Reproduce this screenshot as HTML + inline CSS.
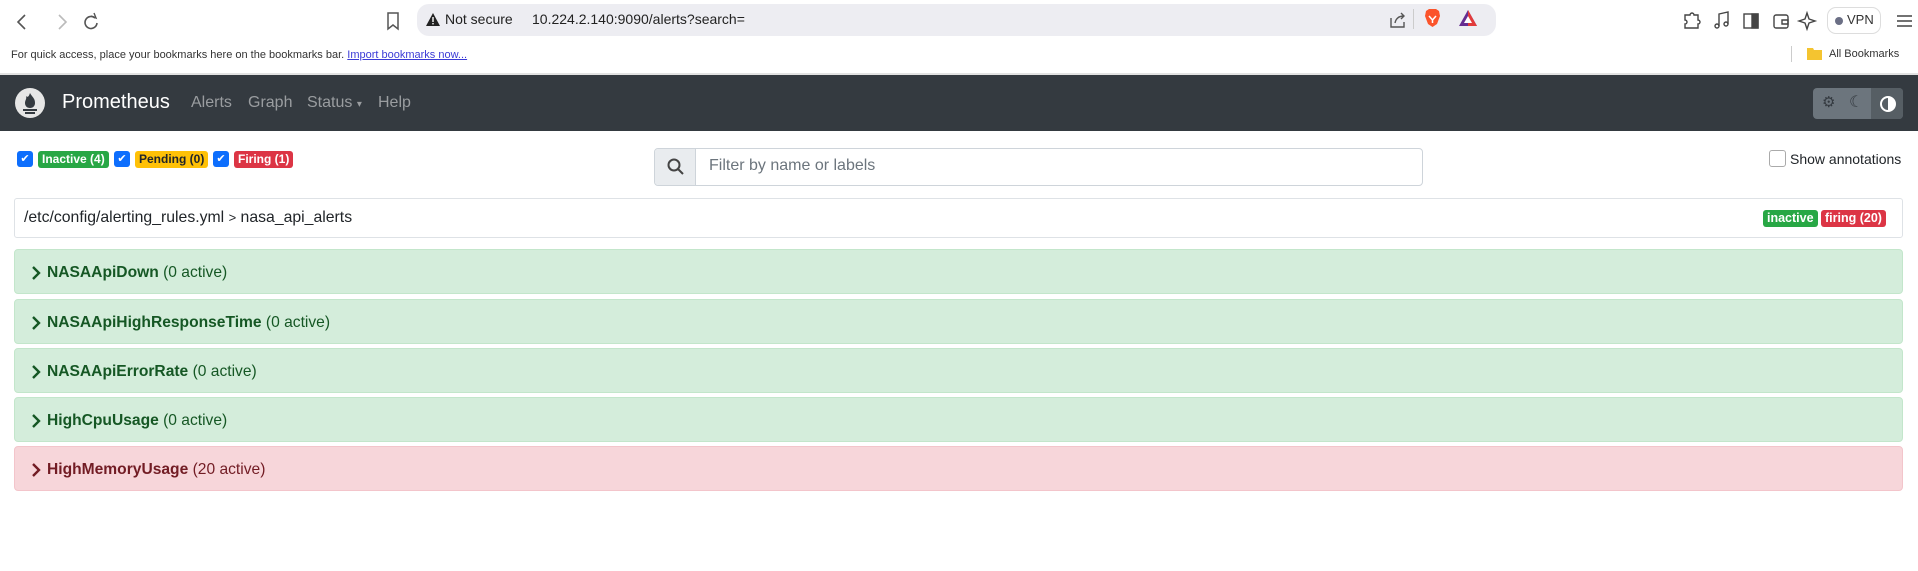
<!DOCTYPE html>
<html><head><meta charset="utf-8"><style>
*{box-sizing:border-box;margin:0;padding:0}
body{width:1918px;height:571px;overflow:hidden;background:#fff;font-family:"Liberation Sans",Arial,sans-serif;position:relative;color:#212529}
.a{position:absolute}
.url{left:417px;top:4px;width:1079px;height:32px;background:#ededf2;border-radius:12px}
.nav{left:0;top:75px;width:1918px;height:56px;background:#343a40}
.nl{color:#9a9da0;font-size:16px;top:19px}
.badge{position:absolute;top:151px;height:17px;border-radius:3px;font-size:12px;font-weight:bold;line-height:17px;padding:0 4px}
.cb{position:absolute;top:151px;width:16px;height:16px;background:#0d6efd;border-radius:3px;color:#fff;font-size:11px;text-align:center;line-height:16px}
.row{position:absolute;left:14px;width:1889px;height:45px;border-radius:4px;font-size:15.6px;line-height:45px;padding-left:32px}
.g{background:#d4eddb;border:1px solid #c3e6cb;color:#155724}
.r{background:#f7d6da;border:1px solid #f3c5cb;color:#721c24}
.row b{font-weight:bold}
.row svg{position:absolute;left:16px;top:16px}
</style></head><body>
<svg class="a" style="left:13px;top:12px" width="90" height="20" viewBox="0 0 90 20" fill="none" stroke="#555" stroke-width="1.6"><path d="M12 3 L5 10 L12 17"/><path d="M46 3 L53 10 L46 17" stroke="#bbb"/><path d="M82 6 A6 6 0 1 0 84 11"/><path d="M78 4 L83 6 L81 1" stroke-width="1.4"/></svg>
<svg class="a" style="left:386px;top:11px" width="14" height="20" viewBox="0 0 14 20" fill="none" stroke="#555" stroke-width="1.5"><path d="M2 2 H12 V18 L7 14 L2 18 Z"/></svg>
<div class="a url"></div>
<svg class="a" style="left:426px;top:13px" width="14" height="13" viewBox="0 0 14 13"><path d="M7 0 L14 13 H0 Z" fill="#222"/><rect x="6.3" y="4" width="1.4" height="5" fill="#fff"/><rect x="6.3" y="10" width="1.4" height="1.4" fill="#fff"/></svg>
<div class="a" style="left:445px;top:11px;font-size:14px;color:#222">Not secure</div>
<div class="a" style="left:532px;top:11px;font-size:14px;color:#222">10.224.2.140:9090/alerts?search=</div>
<svg class="a" style="left:1388px;top:10px" width="20" height="20" viewBox="0 0 20 20" fill="none" stroke="#555" stroke-width="1.4"><path d="M3 8 V17 H16 V12"/><path d="M7 13 C8 8 11 6 16 6"/><path d="M13 3 L16 6 L13 9"/></svg>
<div class="a" style="left:1413px;top:9px;width:1px;height:20px;background:#ccc"></div>
<svg class="a" style="left:1424px;top:8px" width="17" height="20" viewBox="0 0 17 20"><path d="M2 3 L5 1 H12 L15 3 L16 8 L13 16 L8.5 19 L4 16 L1 8 Z" fill="#fb542b"/><path d="M5 8 L8.5 12 L12 8 M8.5 12 V15" stroke="#fff" stroke-width="1.5" fill="none"/></svg>
<svg class="a" style="left:1458px;top:9px" width="20" height="18" viewBox="0 0 20 18"><path d="M10 1 L19 17 H1 Z" fill="#662d91"/><path d="M10 1 L19 17 H10 Z" fill="#e23b3b"/><path d="M10 7 L14 14 H6 Z" fill="#fff"/></svg>
<svg class="a" style="left:1682px;top:10px" width="236" height="22" viewBox="0 0 236 22" fill="none" stroke="#444" stroke-width="1.4"><path d="M3 5 H8 A2 2 0 0 1 12 5 H16 V10 A2 2 0 0 1 16 14 V18 H3 V14 A2 2 0 0 0 3 10 Z"/><path d="M37 16 V4 L46 2 V14"/><circle cx="35" cy="16" r="2"/><circle cx="44" cy="14" r="2"/><rect x="62" y="4" width="14" height="14"/><rect x="70" y="4" width="6" height="14" fill="#444"/><rect x="92" y="5" width="14" height="13" rx="2"/><path d="M100 10 H106 V14 H100 Z"/><path d="M125 3 L127 9 L133 11 L127 13 L125 19 L123 13 L117 11 L123 9 Z"/><path d="M215 6 H230 M215 11 H230 M215 16 H230"/></svg>
<div class="a" style="left:1827px;top:7px;width:54px;height:27px;border:1px solid #ddd;border-radius:9px"></div>
<div class="a" style="left:1835px;top:17px;width:8px;height:8px;border-radius:50%;background:#6b6f85"></div>
<div class="a" style="left:1847px;top:12px;font-size:13px;color:#333">VPN</div>
<div class="a" style="left:11px;top:49px;font-size:11px;color:#333">For quick access, place your bookmarks here on the bookmarks bar. <span style="color:#3b3bd6;text-decoration:underline">Import bookmarks now...</span></div>
<div class="a" style="left:1791px;top:46px;width:1px;height:16px;background:#ccc"></div>
<svg class="a" style="left:1807px;top:47px" width="15" height="13" viewBox="0 0 15 13"><path d="M0 1 H6 L7 3 H15 V13 H0 Z" fill="#f4c430"/></svg>
<div class="a" style="left:1829px;top:48px;font-size:11px;color:#333">All Bookmarks</div>
<div class="a" style="left:0;top:73px;width:1918px;height:2px;background:#e2e2e2"></div>
<div class="a nav"></div>
<svg class="a" style="left:15px;top:88px" width="30" height="30" viewBox="0 0 30 30"><circle cx="15" cy="15" r="15" fill="#e6e6e6"/><path d="M15 5 C17 9 20 10 20 15 C20 18 18 20 15 20 C12 20 10 18 10 15 C10 12 12 11 11 8 C13 10 14 8 15 5Z" fill="#343a40"/><rect x="8" y="21" width="14" height="2" fill="#343a40"/><rect x="10" y="24" width="10" height="2" fill="#343a40"/></svg>
<div class="a" style="left:62px;top:91px;font-size:20px;color:#fff">Prometheus</div>
<div class="a nl" style="left:191px;top:94px">Alerts</div>
<div class="a nl" style="left:248px;top:94px">Graph</div>
<div class="a nl" style="left:307px;top:94px">Status <span style="font-size:10px">▾</span></div>
<div class="a nl" style="left:378px;top:94px">Help</div>
<div class="a" style="left:1813px;top:88px;width:90px;height:31px;background:#6c757d;border-radius:4px"></div>
<div class="a" style="left:1871px;top:88px;width:32px;height:31px;background:#565e64;border-radius:0 4px 4px 0"></div>
<div class="a" style="left:1822px;top:93px;font-size:15px;color:#343a40">⚙</div>
<div class="a" style="left:1849px;top:92px;font-size:16px;color:#343a40">☾</div>
<svg class="a" style="left:1880px;top:96px" width="16" height="16" viewBox="0 0 16 16"><circle cx="8" cy="8" r="7" fill="none" stroke="#fff" stroke-width="2"/><path d="M8 1 A7 7 0 0 1 8 15 Z" fill="#fff"/></svg>
<div class="cb" style="left:17px">✔</div>
<div class="badge" style="left:38px;background:#28a745;color:#fff">Inactive (4)</div>
<div class="cb" style="left:114px">✔</div>
<div class="badge" style="left:135px;background:#ffc107;color:#212529">Pending (0)</div>
<div class="cb" style="left:213px">✔</div>
<div class="badge" style="left:234px;background:#dc3545;color:#fff">Firing (1)</div>
<div class="a" style="left:654px;top:148px;width:769px;height:38px;border:1px solid #ced4da;border-radius:4px"></div>
<div class="a" style="left:655px;top:149px;width:41px;height:36px;background:#e9ecef;border-right:1px solid #ced4da;border-radius:3px 0 0 3px"></div>
<svg class="a" style="left:667px;top:158px" width="17" height="17" viewBox="0 0 17 17" fill="none" stroke="#444" stroke-width="2"><circle cx="7" cy="7" r="5.5"/><path d="M11 11 L16 16"/></svg>
<div class="a" style="left:709px;top:157px;font-size:16px;color:#6c757d">Filter by name or labels</div>
<div class="a" style="left:1769px;top:150px;width:17px;height:17px;border:1px solid #aaa;border-radius:3px"></div>
<div class="a" style="left:1790px;top:151px;font-size:14px;color:#212529">Show annotations</div>
<div class="a" style="left:14px;top:198px;width:1889px;height:40px;border:1px solid #dee2e6;border-radius:3px"></div>
<div class="a" style="left:24px;top:209px;font-size:15.8px">/etc/config/alerting_rules.yml <span style="font-size:13px">&gt;</span> nasa_api_alerts</div>
<div class="badge" style="left:1763px;top:210px;background:#28a745;color:#fff;font-size:12.5px">inactive</div>
<div class="badge" style="left:1821px;top:210px;background:#dc3545;color:#fff;font-size:12.5px">firing (20)</div>
<div class="row g" style="top:249px"><svg width="10" height="14" viewBox="0 0 10 14" fill="none" stroke="currentColor" stroke-width="2.4"><path d="M2 1 L8 7 L2 13"/></svg><b>NASAApiDown</b> (0 active)</div>
<div class="row g" style="top:299px"><svg width="10" height="14" viewBox="0 0 10 14" fill="none" stroke="currentColor" stroke-width="2.4"><path d="M2 1 L8 7 L2 13"/></svg><b>NASAApiHighResponseTime</b> (0 active)</div>
<div class="row g" style="top:348px"><svg width="10" height="14" viewBox="0 0 10 14" fill="none" stroke="currentColor" stroke-width="2.4"><path d="M2 1 L8 7 L2 13"/></svg><b>NASAApiErrorRate</b> (0 active)</div>
<div class="row g" style="top:397px"><svg width="10" height="14" viewBox="0 0 10 14" fill="none" stroke="currentColor" stroke-width="2.4"><path d="M2 1 L8 7 L2 13"/></svg><b>HighCpuUsage</b> (0 active)</div>
<div class="row r" style="top:446px"><svg width="10" height="14" viewBox="0 0 10 14" fill="none" stroke="currentColor" stroke-width="2.4"><path d="M2 1 L8 7 L2 13"/></svg><b>HighMemoryUsage</b> (20 active)</div>
</body></html>
